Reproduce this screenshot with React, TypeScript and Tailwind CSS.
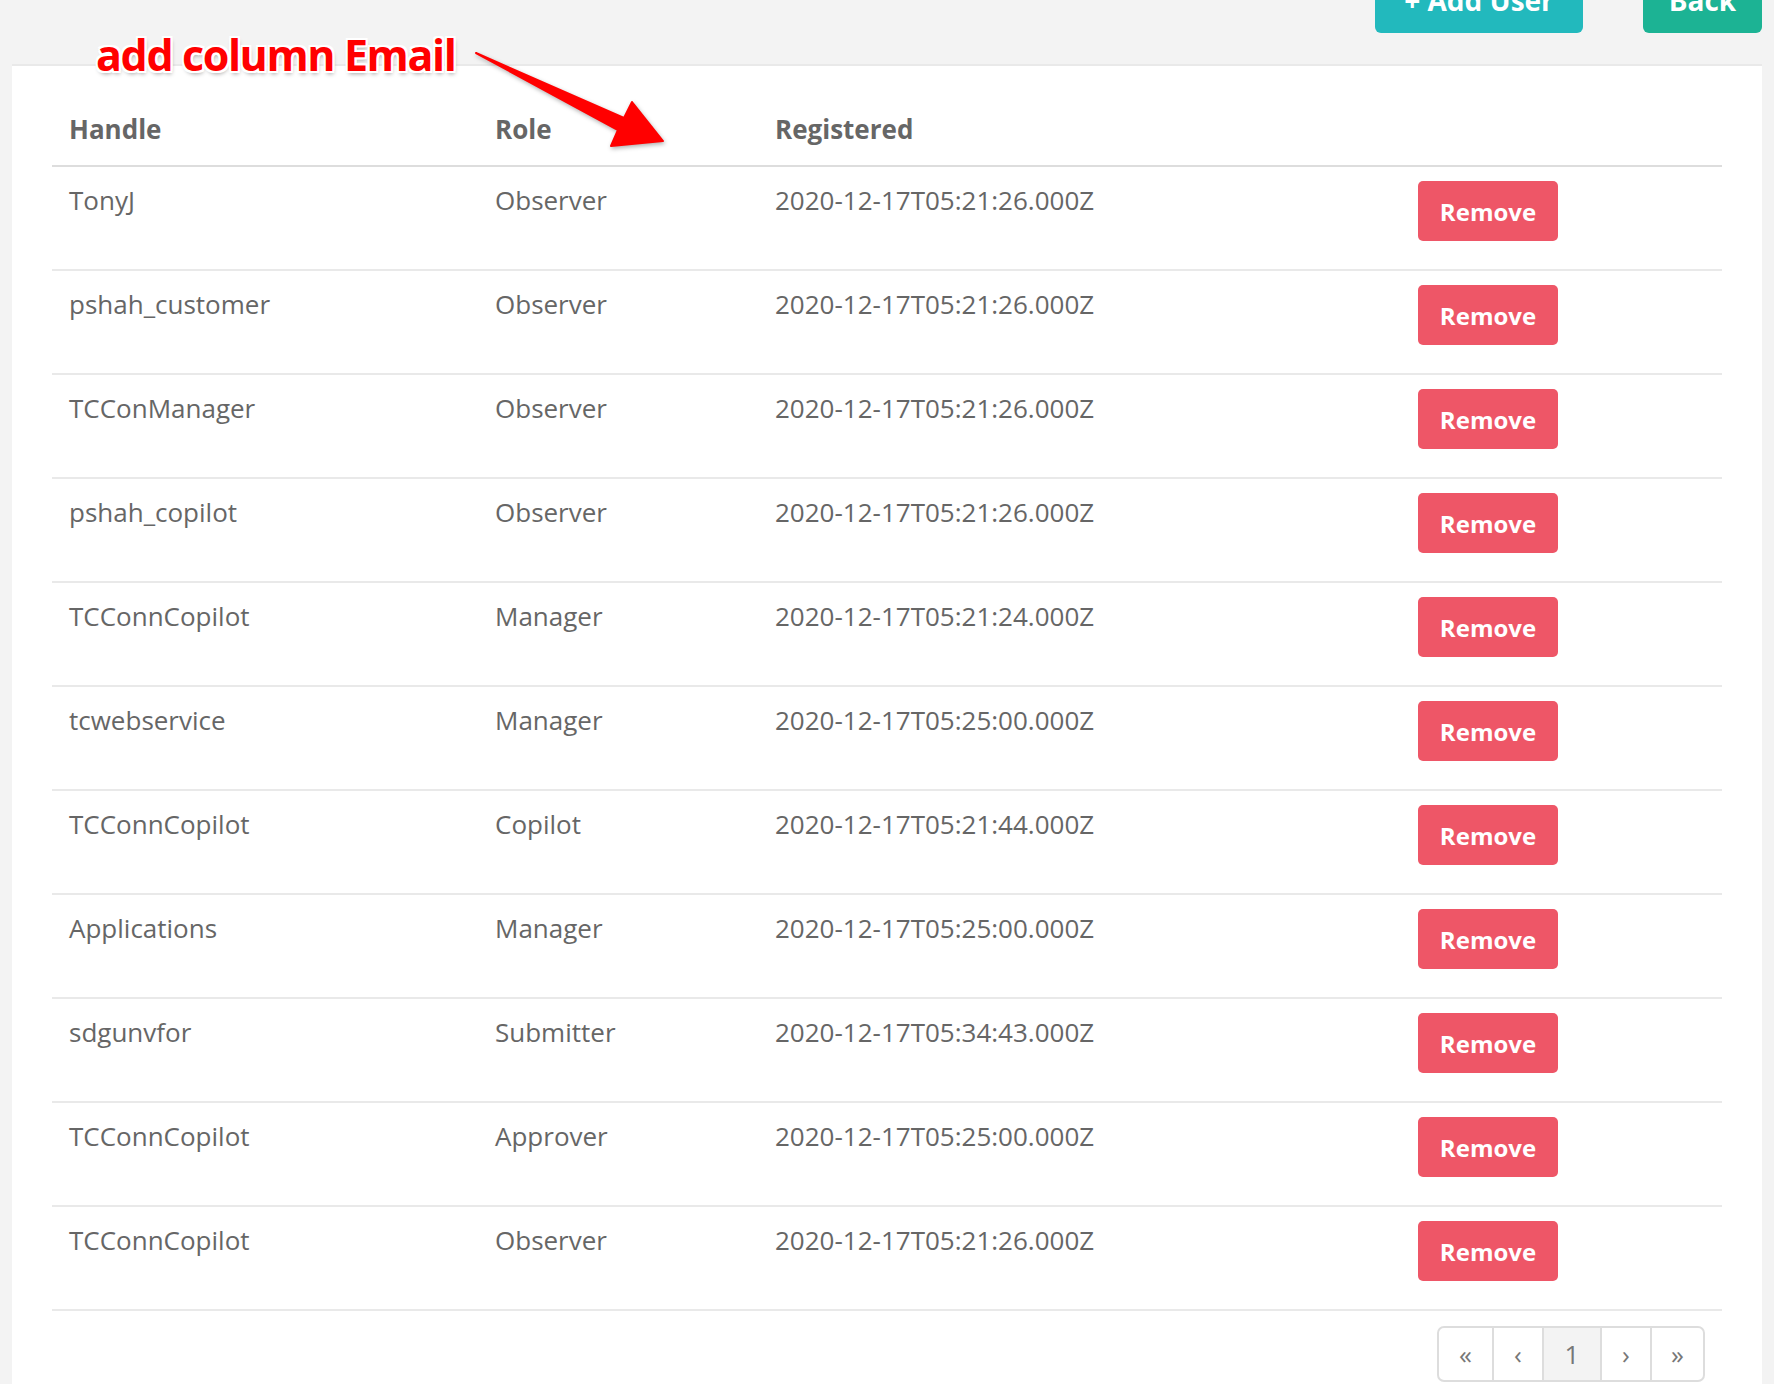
//Setup the Table Data
const members = [
	{ handle: "TonyJ", role: "Observer", registered: "2020-12-17T05:21:26.000Z" },
	{ handle: "pshah_customer", role: "Observer", registered: "2020-12-17T05:21:26.000Z" },
	{ handle: "TCConManager", role: "Observer", registered: "2020-12-17T05:21:26.000Z" },
	{ handle: "pshah_copilot", role: "Observer", registered: "2020-12-17T05:21:26.000Z" },
	{ handle: "TCConnCopilot", role: "Manager", registered: "2020-12-17T05:21:24.000Z" },
	{ handle: "tcwebservice", role: "Manager", registered: "2020-12-17T05:25:00.000Z" },
	{ handle: "TCConnCopilot", role: "Copilot", registered: "2020-12-17T05:21:44.000Z" },
	{ handle: "Applications", role: "Manager", registered: "2020-12-17T05:25:00.000Z" },
	{ handle: "sdgunvfor", role: "Submitter", registered: "2020-12-17T05:34:43.000Z" },
	{ handle: "TCConnCopilot", role: "Approver", registered: "2020-12-17T05:25:00.000Z" },
	{ handle: "TCConnCopilot", role: "Observer", registered: "2020-12-17T05:21:26.000Z" },
];

//Setup the Pagination Items
const pages = ["«", "‹", "1", "›", "»"];

//Setup the Page
export default function App() {
	//Return the Page's Content
	return (
		<div
			className="relative min-h-screen bg-[#f3f3f3] px-[12px] text-[#666666]"
			style={{ fontFamily: '"Open Sans", "Liberation Sans", sans-serif' }}
		>
			{/*Setup the Top Bar*/}
			<div className="flex h-[64px] items-start justify-end gap-[60px] overflow-hidden">
				{/*Setup the Add User Button*/}
				<button className="-mt-[33px] flex h-[66px] w-[208px] items-center justify-center rounded-[6px] bg-[#22b9bd] text-[28px] font-bold text-white">
					+ Add User
				</button>

				{/*Setup the Back Button*/}
				<button className="-mt-[33px] flex h-[66px] w-[119px] items-center justify-center rounded-[6px] bg-[#1cb394] text-[28px] font-bold text-white">
					Back
				</button>
			</div>

			{/*Setup the Card*/}
			<div className="border-t-2 border-[#e9e9e9] bg-white px-[40px] pt-[28px] pb-[60px]">
				{/*Setup the Header Row*/}
				<div className="grid h-[73px] grid-cols-[426px_280px_643px_321px] border-b-2 border-[#dddddd] text-[26px] leading-[39px] font-bold">
					<div className="px-[17px] pt-[16px]">Handle</div>
					<div className="px-[17px] pt-[16px]">Role</div>
					<div className="px-[17px] pt-[16px]">Registered</div>
					<div />
				</div>

				{/*Setup the Member Rows*/}
				{members.map((member, index) => (
					<div
						key={index}
						className="grid h-[104px] grid-cols-[426px_280px_643px_321px] border-b-2 border-[#e9e9e9] text-[26px] leading-[39px]"
					>
						<div className="px-[17px] pt-[14px]">{member.handle}</div>
						<div className="px-[17px] pt-[14px]">{member.role}</div>
						<div className="px-[17px] pt-[14px]">{member.registered}</div>
						<div className="px-[17px] pt-[14px]">
							<button className="flex h-[60px] w-[140px] items-center justify-center rounded-[5px] bg-[#ee5667] text-[24px] font-bold text-white">
								Remove
							</button>
						</div>
					</div>
				))}

				{/*Setup the Pagination*/}
				<div className="mt-[15px] mr-[17px] flex justify-end">
					<div className="flex h-[56px] overflow-hidden rounded-[7px] border-2 border-[#dddddd] text-[26px] text-[#777777]">
						{pages.map((page, index) => (
							<div
								key={index}
								className={
									"flex items-center justify-center border-[#dddddd] " +
									(index > 0 ? "border-l-2 " : "") +
									(page === "1" ? "w-[58px] bg-[#f3f3f3] " : index === 0 || index === 4 ? "w-[53px] " : "w-[50px] ")
								}
							>
								{page}
							</div>
						))}
					</div>
				</div>
			</div>

			{/*Setup the Annotation Text*/}
			<div className="absolute top-[33px] left-[96px] text-[43px] leading-[43px] font-bold tracking-[-1.4px] text-[#ff0000] [text-shadow:2px_0_0_#fff,-2px_0_0_#fff,0_2px_0_#fff,0_-2px_0_#fff,2px_2px_0_#fff,-2px_-2px_0_#fff,2px_-2px_0_#fff,-2px_2px_0_#fff,1px_3px_4px_rgba(0,0,0,0.35)]">
				add column Email
			</div>

			{/*Setup the Annotation Arrow*/}
			<svg
				className="absolute top-0 left-0 drop-shadow-[1px_2px_2px_rgba(0,0,0,0.3)]"
				width="700"
				height="170"
				viewBox="0 0 700 170"
			>
				<polygon
					points="476,53 624,118 632,102 663,141 611,146 618,130"
					fill="#ff0000"
					stroke="#ff0000"
					strokeWidth="2"
					strokeLinejoin="round"
				/>
			</svg>
		</div>
	);
}
